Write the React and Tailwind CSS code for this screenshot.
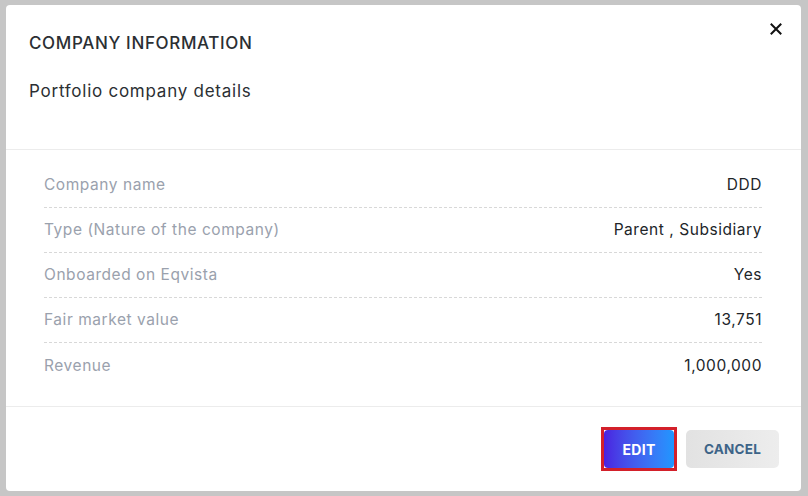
import React from 'react'

const rows = [
  { label: 'Company name', value: 'DDD' },
  { label: 'Type (Nature of the company)', value: 'Parent , Subsidiary' },
  { label: 'Onboarded on Eqvista', value: 'Yes' },
  { label: 'Fair market value', value: '13,751' },
  { label: 'Revenue', value: '1,000,000' },
]

export default function App() {
  return (
    <div
      className="w-[808px] h-[496px] bg-[#c6c6c6] pt-[5px] pl-[6px] overflow-hidden"
      style={{ fontFamily: 'Inter, "Open Sans", sans-serif' }}
    >
      <div className="w-[795px] h-[486px] bg-white rounded-[4px] flex flex-col">
        {/* header */}
        <div className="relative h-[145px] border-b border-[#ececec] pl-[23px] pt-[27px]">
          <h2 className="text-[17px] leading-[22px] font-medium text-[#2b2f33] tracking-[0.65px]">
            COMPANY INFORMATION
          </h2>
          <p className="mt-[26px] text-[17px] leading-[22px] text-[#2b2f33] tracking-[0.75px]">
            Portfolio company details
          </p>
          <button
            type="button"
            className="absolute right-[16px] top-[15px] w-[18px] h-[18px] flex items-center justify-center"
          >
            <svg width="12" height="12" viewBox="0 0 12 12">
              <path d="M1.5 1.5L10.5 10.5M10.5 1.5L1.5 10.5" stroke="#111" strokeWidth="2" strokeLinecap="square" />
            </svg>
          </button>
        </div>

        {/* body */}
        <div className="h-[257px] border-b border-[#ececec] pl-[38px] pr-[39px] pt-[13px]">
          {rows.map((row, i) => (
            <div
              key={row.label}
              className={`h-[45px] flex items-center justify-between text-[15.5px] tracking-[0.55px] ${
                i < rows.length - 1 ? 'border-b border-dashed border-[#d8d8d8]' : ''
              }`}
            >
              <span className="text-[#9aa1ad]">{row.label}</span>
              <span className="text-[#212529]">{row.value}</span>
            </div>
          ))}
        </div>

        {/* footer */}
        <div className="flex-1 flex items-start justify-end gap-[9px] pr-[22px] pt-[20px]">
          <div className="border-[3px] border-[#d3202a]">
            <button
              type="button"
              className="w-[70px] h-[38px] rounded-[4px] bg-gradient-to-r from-[#4a1fe0] to-[#1e96ff] text-white text-[14px] font-bold tracking-[0.3px]"
            >
              EDIT
            </button>
          </div>
          <button
            type="button"
            className="mt-[3px] w-[93px] h-[38px] rounded-[5px] bg-gradient-to-r from-[#e2e2e2] to-[#ededed] text-[#3d6488] text-[13.5px] font-bold tracking-[0.2px]"
          >
            CANCEL
          </button>
        </div>
      </div>
    </div>
  )
}
